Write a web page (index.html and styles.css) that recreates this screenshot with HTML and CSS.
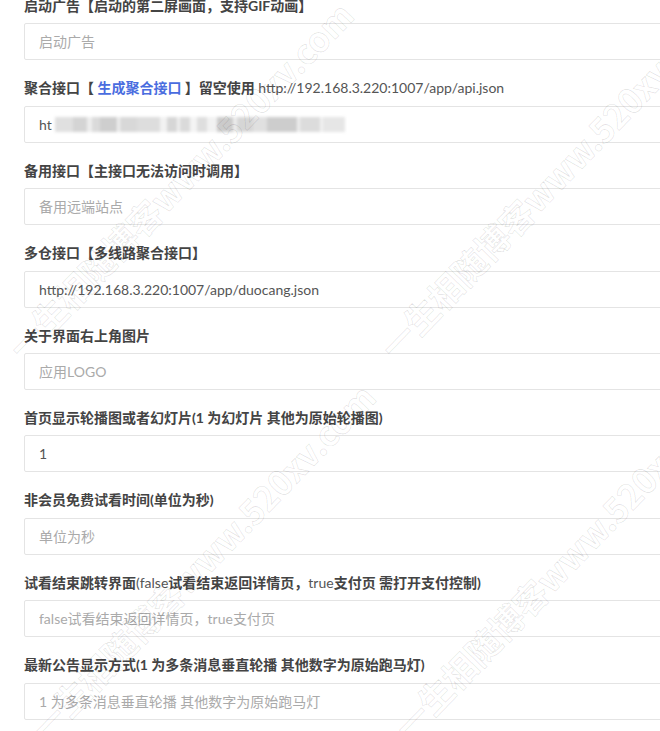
FILE: index.html
```html
<!DOCTYPE html>
<html lang="zh-CN">
<head>
<meta charset="utf-8">
<title>接口设置</title>
<link rel="stylesheet" href="styles.css">
</head>
<body>
<form class="form">
  <div class="group">
    <label class="label">启动广告【启动的第二屏画面，支持GIF动画】</label>
    <input class="input" type="text" placeholder="启动广告">
  </div>
  <div class="group">
    <label class="label">聚合接口【 <a class="link" href="#">生成聚合接口</a> 】留空使用 <span class="plain">http://192.168.3.220:1007/app/api.json</span></label>
    <div class="field-wrap">
      <input class="input" type="text" value="ht">
      <span class="mosaic"></span>
    </div>
  </div>
  <div class="group">
    <label class="label">备用接口【主接口无法访问时调用】</label>
    <input class="input" type="text" placeholder="备用远端站点">
  </div>
  <div class="group">
    <label class="label">多仓接口【多线路聚合接口】</label>
    <input class="input" type="text" value="http://192.168.3.220:1007/app/duocang.json">
  </div>
  <div class="group">
    <label class="label">关于界面右上角图片</label>
    <input class="input" type="text" placeholder="应用LOGO">
  </div>
  <div class="group">
    <label class="label">首页显示轮播图或者幻灯片(1 为幻灯片 其他为原始轮播图)</label>
    <input class="input" type="text" value="1">
  </div>
  <div class="group">
    <label class="label">非会员免费试看时间(单位为秒)</label>
    <input class="input" type="text" placeholder="单位为秒">
  </div>
  <div class="group">
    <label class="label">试看结束跳转界面<span class="plain">(false</span>试看结束返回详情页，<span class="plain">true</span>支付页 需打开支付控制)</label>
    <input class="input" type="text" placeholder="false试看结束返回详情页，true支付页">
  </div>
  <div class="group">
    <label class="label">最新公告显示方式(1 为多条消息垂直轮播 其他数字为原始跑马灯)</label>
    <input class="input" type="text" placeholder="1 为多条消息垂直轮播 其他数字为原始跑马灯">
  </div>
</form>
<div class="wm-layer" aria-hidden="true">
  <span class="wm wm-a">一生相随博客www.520xv.com</span>
  <span class="wm wm-b">一生相随博客www.520xv.com</span>
  <span class="wm wm-c">一生相随博客www.520xv.com</span>
  <span class="wm wm-d">一生相随博客www.520xv.com</span>
</div>
</body>
</html>
```
FILE: styles.css
```css
html, body {
  margin: 0;
  padding: 0;
  overflow: hidden;
  background: #fff;
}
body {
  position: relative;
  height: 731px;
  font-family: Lato, "Noto Sans CJK SC", sans-serif;
  font-size: 14px;
  color: #555;
}
.form {
  width: 760px;
  margin-top: -5px;
  padding-left: 24px;
  box-sizing: border-box;
}
.group {
  margin-bottom: 17px;
}
.label {
  display: block;
  line-height: 22.4px;
  margin-bottom: 6px;
  font-weight: 700;
  color: #444;
  white-space: nowrap;
}
.label .plain {
  font-weight: 400;
  color: #555;
}
.link {
  color: #4a6ddf;
  text-decoration: none;
}
.input {
  display: block;
  width: 100%;
  height: 37px;
  box-sizing: border-box;
  border: 1px solid #e4e4e4;
  border-radius: 2px;
  padding: 0 14px;
  font-family: Lato, "Noto Sans CJK SC", sans-serif;
  font-size: 14px;
  color: #555;
  background: #fff;
  outline: none;
}
.input::placeholder {
  color: #aaa;
}
.field-wrap {
  position: relative;
}
.mosaic {
  position: absolute;
  left: 31px;
  top: 11px;
  width: 290px;
  height: 15px;
  filter: blur(1.6px);
  background: linear-gradient(90deg,
    #e0e0e0 0 18px, #d4d4d4 18px 32px, #eeeeee 32px 37px, #dadada 37px 45px,
    #cecece 45px 62px, #f0f0f0 62px 65px, #d8d8d8 65px 82px, #dddddd 82px 105px,
    #f2f2f2 105px 112px, #d6d6d6 112px 122px, #f0f0f0 122px 125px, #dadada 125px 135px,
    #f4f4f4 135px 142px, #dedede 142px 152px, #f2f2f2 152px 162px, #cbcbcb 162px 178px,
    #eeeeee 178px 182px, #d6d6d6 182px 198px, #e0e0e0 198px 212px, #cdcdcd 212px 242px,
    #f0f0f0 242px 245px, #dcdcdc 245px 265px, #f2f2f2 265px 268px, #e6e6e6 268px 290px);
}
.wm-layer {
  position: absolute;
  left: 0;
  top: 0;
  width: 660px;
  height: 731px;
  overflow: hidden;
  pointer-events: none;
}
.wm {
  position: absolute;
  white-space: nowrap;
  font-family: "Noto Sans CJK SC", sans-serif;
  font-weight: 700;
  font-size: 34px;
  line-height: 1;
  color: rgba(0, 0, 0, 0.025);
  -webkit-text-stroke: 0.7px rgba(0, 0, 0, 0.12);
  transform: rotate(-46deg);
  transform-origin: 0 100%;
}
.wm-a { left: 26px; top: 330px; }
.wm-b { left: 398px; top: 330px; }
.wm-c { left: 48px; top: 712px; }
.wm-d { left: 412px; top: 710px; }
```
